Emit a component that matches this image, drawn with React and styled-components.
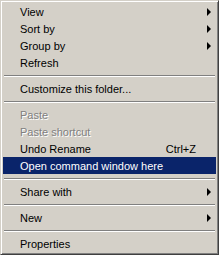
import React from 'react';
import styled, { createGlobalStyle } from 'styled-components';

const GlobalStyle = createGlobalStyle`
	html, body {
		margin: 0;
		padding: 0;
		background: #d4d0c8;
	}
`;

const Menu = styled.div`
	width: 219px;
	height: 255px;
	box-sizing: border-box;
	background: #d4d0c8;
	border: 1px solid;
	border-color: #d4d0c8 #404040 #404040 #d4d0c8;
	box-shadow: inset 1px 1px #ffffff, inset -1px -1px #808080;
	padding: 2px;
	font-family: Tahoma, 'Liberation Sans', Arial, sans-serif;
	font-size: 11px;
	color: #000;
`;

const Item = styled.div`
	height: 17px;
	display: flex;
	align-items: center;
	padding-left: 17px;
	padding-right: 5px;
	background: ${p => (p.$active ? '#0a246a' : 'transparent')};
	color: ${p => (p.$active ? '#fff' : p.$disabled ? '#808080' : '#000')};
	text-shadow: ${p => (p.$disabled ? '1px 1px 0 #fff' : 'none')};
	white-space: nowrap;
`;

const Label = styled.span`
	flex: 1;
`;

const Shortcut = styled.span`
	margin-right: 15px;
`;

const Arrow = styled.span`
	width: 0;
	height: 0;
	border-top: 4px solid transparent;
	border-bottom: 4px solid transparent;
	border-left: 4px solid ${p => (p.$active ? '#fff' : '#000')};
`;

const Separator = styled.div`
	height: 9px;
	display: flex;
	align-items: center;
	padding: 0 1px;
	&::after {
		content: '';
		flex: 1;
		height: 0;
		border-top: 1px solid #808080;
		border-bottom: 1px solid #ffffff;
	}
`;

const entries = [
	{ label: 'View', sub: true },
	{ label: 'Sort by', sub: true },
	{ label: 'Group by', sub: true },
	{ label: 'Refresh' },
	'-',
	{ label: 'Customize this folder...' },
	'-',
	{ label: 'Paste', disabled: true },
	{ label: 'Paste shortcut', disabled: true },
	{ label: 'Undo Rename', shortcut: 'Ctrl+Z' },
	{ label: 'Open command window here', active: true },
	'-',
	{ label: 'Share with', sub: true },
	'-',
	{ label: 'New', sub: true },
	'-',
	{ label: 'Properties' },
];

const App = () => {
	return (
		<>
			<GlobalStyle />
			<Menu>
				{entries.map((e, i) =>
					e === '-' ? (
						<Separator key={i} />
					) : (
						<Item key={i} $active={e.active} $disabled={e.disabled}>
							<Label>{e.label}</Label>
							{e.shortcut && <Shortcut>{e.shortcut}</Shortcut>}
							{e.sub && <Arrow $active={e.active} />}
						</Item>
					)
				)}
			</Menu>
		</>
	);
};

export default App;
